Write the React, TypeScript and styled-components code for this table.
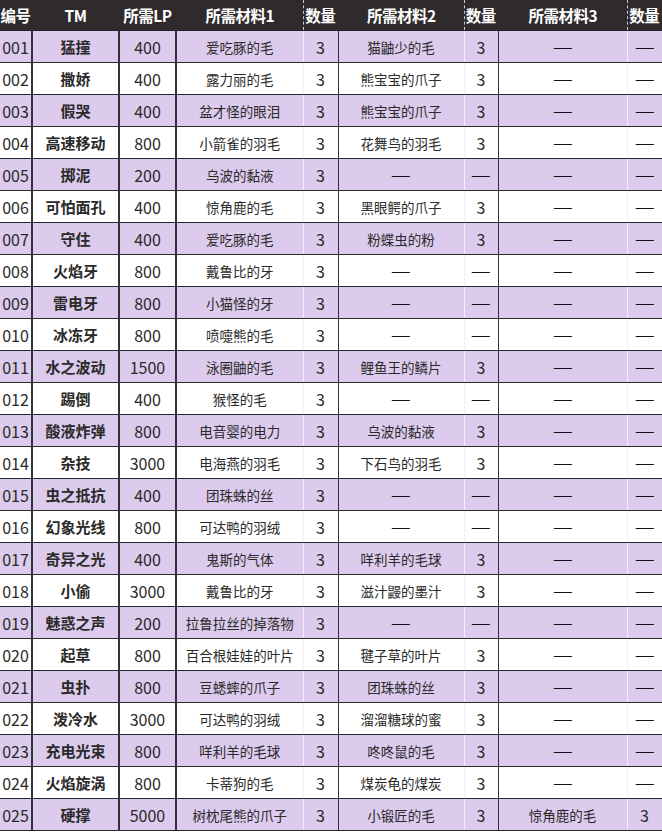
import styled, { createGlobalStyle } from "styled-components";

const GlobalStyle = createGlobalStyle`
  html, body {
    margin: 0;
    padding: 0;
    background: #fff;
  }
  body {
    font-family: "Noto Sans CJK SC", "Noto Sans", sans-serif;
  }
`;

type Sep = "dark" | "light";

// column widths and the kind of line on the right of each column
const columns: { width: number; sep: Sep }[] = [
  { width: 32, sep: "dark" },
  { width: 87, sep: "dark" },
  { width: 57, sep: "dark" },
  { width: 127, sep: "light" },
  { width: 35, sep: "dark" },
  { width: 126, sep: "light" },
  { width: 34, sep: "dark" },
  { width: 129, sep: "light" },
  { width: 35, sep: "dark" },
];

const headers = ["编号", "TM", "所需LP", "所需材料1", "数量", "所需材料2", "数量", "所需材料3", "数量"];

const D = "—";

const rows: string[][] = [
  ["001", "猛撞", "400", "爱吃豚的毛", "3", "猫鼬少的毛", "3", D, D],
  ["002", "撒娇", "400", "露力丽的毛", "3", "熊宝宝的爪子", "3", D, D],
  ["003", "假哭", "400", "盆才怪的眼泪", "3", "熊宝宝的爪子", "3", D, D],
  ["004", "高速移动", "800", "小箭雀的羽毛", "3", "花舞鸟的羽毛", "3", D, D],
  ["005", "掷泥", "200", "乌波的黏液", "3", D, D, D, D],
  ["006", "可怕面孔", "400", "惊角鹿的毛", "3", "黑眼鳄的爪子", "3", D, D],
  ["007", "守住", "400", "爱吃豚的毛", "3", "粉蝶虫的粉", "3", D, D],
  ["008", "火焰牙", "800", "戴鲁比的牙", "3", D, D, D, D],
  ["009", "雷电牙", "800", "小猫怪的牙", "3", D, D, D, D],
  ["010", "冰冻牙", "800", "喷嚏熊的毛", "3", D, D, D, D],
  ["011", "水之波动", "1500", "泳圈鼬的毛", "3", "鲤鱼王的鳞片", "3", D, D],
  ["012", "踢倒", "400", "猴怪的毛", "3", D, D, D, D],
  ["013", "酸液炸弹", "800", "电音婴的电力", "3", "乌波的黏液", "3", D, D],
  ["014", "杂技", "3000", "电海燕的羽毛", "3", "下石鸟的羽毛", "3", D, D],
  ["015", "虫之抵抗", "400", "团珠蛛的丝", "3", D, D, D, D],
  ["016", "幻象光线", "800", "可达鸭的羽绒", "3", D, D, D, D],
  ["017", "奇异之光", "400", "鬼斯的气体", "3", "咩利羊的毛球", "3", D, D],
  ["018", "小偷", "3000", "戴鲁比的牙", "3", "滋汁鼹的墨汁", "3", D, D],
  ["019", "魅惑之声", "200", "拉鲁拉丝的掉落物", "3", D, D, D, D],
  ["020", "起草", "800", "百合根娃娃的叶片", "3", "毽子草的叶片", "3", D, D],
  ["021", "虫扑", "800", "豆蟋蟀的爪子", "3", "团珠蛛的丝", "3", D, D],
  ["022", "泼冷水", "3000", "可达鸭的羽绒", "3", "溜溜糖球的蜜", "3", D, D],
  ["023", "充电光束", "800", "咩利羊的毛球", "3", "咚咚鼠的毛", "3", D, D],
  ["024", "火焰旋涡", "800", "卡蒂狗的毛", "3", "煤炭龟的煤炭", "3", D, D],
  ["025", "硬撑", "5000", "树枕尾熊的爪子", "3", "小锻匠的毛", "3", "惊角鹿的毛", "3"],
];

type Kind = "name" | "num" | "text" | "qty" | "dash";

const kindOf = (ci: number, v: string): Kind => {
  if (ci === 1) return "name";
  if (ci === 0 || ci === 2) return "num";
  if (v === D) return "dash";
  return ci % 2 === 0 ? "qty" : "text";
};

export default function App() {
  return (
    <>
      <GlobalStyle />
      <Table>
        <colgroup>
          {columns.map((c, i) => (
            <col key={i} style={{ width: c.width }} />
          ))}
        </colgroup>
        <thead>
          <tr>
            {headers.map((h, i) => (
              <HeadCell key={i} $sep={columns[i].sep}>
                {h}
              </HeadCell>
            ))}
          </tr>
        </thead>
        <tbody>
          {rows.map((r, ri) => (
            <BodyRow key={ri} $purple={ri % 2 === 0}>
              {r.map((v, ci) => {
                const kind = kindOf(ci, v);
                return (
                  <Cell key={ci} $sep={columns[ci].sep} $kind={kind} $thick={ci < 3}>
                    {kind === "dash" ? <Dash>{v}</Dash> : v}
                  </Cell>
                );
              })}
            </BodyRow>
          ))}
        </tbody>
      </Table>
    </>
  );
}

const Table = styled.table`
  width: 662px;
  table-layout: fixed;
  border-collapse: collapse;
  color: #2a2a2a;
`;

const HeadCell = styled.th<{ $sep: Sep }>`
  height: 30px;
  padding: 0;
  background: #2f2b2c;
  color: #fff;
  font-size: 15.5px;
  font-weight: 700;
  text-align: center;
  white-space: nowrap;
  letter-spacing: -0.5px;
  border-bottom: 1px solid #222;
  border-right: ${(p) =>
    p.$sep === "light" ? "1px dashed rgba(255,255,255,0.75)" : "2px solid #2f2b2c"};
`;

const BodyRow = styled.tr<{ $purple: boolean }>`
  height: 32px;
  background: ${(p) => (p.$purple ? "#dccbec" : "#ffffff")};
`;

const Cell = styled.td<{ $sep: Sep; $kind: Kind; $thick: boolean }>`
  padding: 0;
  text-align: center;
  white-space: nowrap;
  overflow: hidden;
  border-bottom: 1px solid #2b2b2b;
  border-right: ${(p) =>
    p.$sep === "light"
      ? "1px solid #f3eef7"
      : p.$thick
      ? "2px solid #333"
      : "1px solid #333"};
  font-size: ${(p) =>
    p.$kind === "name"
      ? "15px"
      : p.$kind === "num" || p.$kind === "qty"
      ? "16px"
      : p.$kind === "dash"
      ? "15px"
      : "13.5px"};
  font-weight: ${(p) => (p.$kind === "name" ? 700 : 400)};
  color: #2a2a2a;
`;

const Dash = styled.span`
  display: inline-block;
  color: #111;
  transform: scaleX(1.5);
`;
